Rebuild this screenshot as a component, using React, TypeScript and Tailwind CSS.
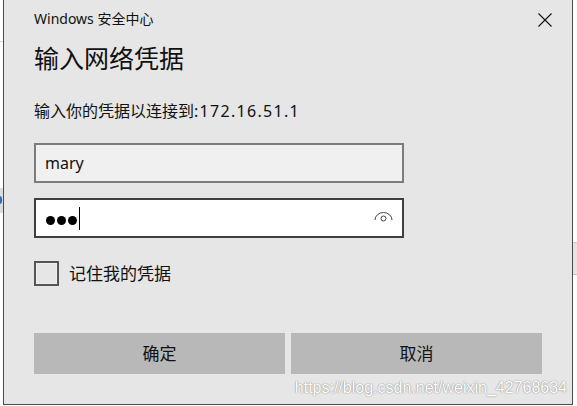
import React from 'react'

const ui = { fontFamily: '"Noto Sans", "Noto Sans CJK SC", sans-serif' }

export default function App() {
  return (
    <div className="relative w-[577px] h-[406px] bg-white overflow-hidden" style={ui}>
      {/* bits of the window behind the dialog */}
      <div className="absolute left-0 top-[41px] w-[3px] h-[1px] bg-[#d8d8d8]" />
      <div className="absolute left-0 top-[188px] w-[3px] h-[25px] bg-[#dcdcdc]">
        <div className="absolute left-[-3px] top-[8px] w-[5px] h-[8px] rounded-full bg-[#2f6db5]" />
      </div>
      <div className="absolute right-0 top-[242px] w-[4px] h-[33px] bg-[#e4e4e4] border-y border-[#c8c8c8]" />

      <div className="ml-[3px] w-[570px] h-[405px] bg-[#e6e6e6] border-x border-b border-[#4a4a4a] pl-[30px] relative">
        <div className="flex justify-between items-center pt-[10px] h-[28px]">
          <span className="text-[14px] leading-[18px] text-[#111]">Windows 安全中心</span>
          <svg width="14" height="14" viewBox="0 0 14 14" className="mr-[20px] mt-[1px]">
            <path d="M0.5 0.5 L13.5 13.5 M13.5 0.5 L0.5 13.5" stroke="#111" strokeWidth="1.1" />
          </svg>
        </div>

        <h1 className="mt-[14px] text-[25px] leading-[32px] text-[#111]">输入网络凭据</h1>

        <p className="mt-[26px] text-[16px] leading-[22px] text-[#111]">
          输入你的凭据以连接到<span className="tracking-[1.3px]">:172.16.51.1</span>
        </p>

        <div className="mt-[21px] w-[370px] h-[40px] border-2 border-[#7c7c7c] bg-[#f0f0f0] flex items-center pl-[9px]">
          <span className="text-[16px] leading-[20px] text-[#111]">mary</span>
        </div>

        <div className="mt-[15px] w-[370px] h-[40px] border-2 border-[#3f3f3f] bg-white flex items-center pl-[10px] pr-[10px]">
          <div className="flex items-center gap-[2px] mt-[4px]">
            <span className="w-[9px] h-[9px] rounded-full bg-black" />
            <span className="w-[9px] h-[9px] rounded-full bg-black" />
            <span className="w-[9px] h-[9px] rounded-full bg-black" />
          </div>
          <span className="ml-[2px] w-[1px] h-[23px] bg-black mt-[1px]" />
          <svg width="19" height="11" viewBox="0 0 19 11" className="ml-auto mr-[-1px] mt-[-3px]">
            <path d="M1 9 A8.5 7.5 0 0 1 18 9" fill="none" stroke="#444" strokeWidth="1" />
            <circle cx="9.5" cy="7.5" r="2.5" fill="none" stroke="#444" strokeWidth="1" />
          </svg>
        </div>

        <label className="mt-[23px] flex items-center gap-[10px] h-[25px]">
          <span className="w-[25px] h-[25px] border-2 border-[#555] bg-[#e6e6e6] shadow-[inset_0_0_0_1px_#f0f0f0]" />
          <span className="text-[17px] leading-[24px] text-[#111]">记住我的凭据</span>
        </label>

        <div className="mt-[47px] flex gap-[6px]">
          <button className="w-[251px] h-[41px] bg-[#b8b8b8] text-[17px] text-[#111]">确定</button>
          <button className="w-[251px] h-[41px] bg-[#b8b8b8] text-[17px] text-[#111]">取消</button>
        </div>

        <div
          className="absolute right-[5px] top-[378px] text-[16px] leading-[20px] text-white [text-shadow:0_0_1px_rgba(0,0,0,0.45),0_0_2px_rgba(0,0,0,0.2)]"
          style={{ fontFamily: '"Liberation Sans", Arial, sans-serif' }}
        >
          https://blog.csdn.net/weixin_42768634
        </div>
      </div>
    </div>
  )
}
